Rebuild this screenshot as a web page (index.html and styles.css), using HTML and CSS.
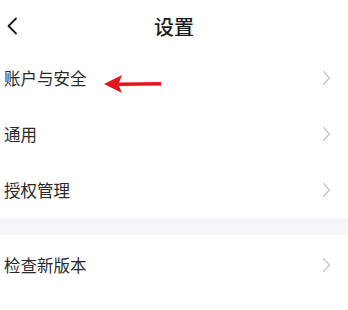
FILE: index.html
```html
<!DOCTYPE html>
<html lang="zh">
<head>
<meta charset="utf-8">
<link rel="stylesheet" href="styles.css">
</head>
<body>
<div class="page">
  <header class="nav">
    <svg class="back" width="12" height="18" viewBox="0 0 12 18"><path d="M10 1.5 L2.5 9 L10 16.5" fill="none" stroke="#1a1a1a" stroke-width="1.8" stroke-linecap="round" stroke-linejoin="round"/></svg>
    <div class="title">设置</div>
  </header>
  <div class="group">
    <div class="row"><span class="label">账户与安全</span><svg class="chev" width="9" height="16" viewBox="0 0 9 16"><path d="M1.5 1.5 L7.5 8 L1.5 14.5" fill="none" stroke="#c7c7c9" stroke-width="1.3" stroke-linecap="round" stroke-linejoin="round"/></svg></div>
    <div class="row"><span class="label">通用</span><svg class="chev" width="9" height="16" viewBox="0 0 9 16"><path d="M1.5 1.5 L7.5 8 L1.5 14.5" fill="none" stroke="#c7c7c9" stroke-width="1.3" stroke-linecap="round" stroke-linejoin="round"/></svg></div>
    <div class="row"><span class="label">授权管理</span><svg class="chev" width="9" height="16" viewBox="0 0 9 16"><path d="M1.5 1.5 L7.5 8 L1.5 14.5" fill="none" stroke="#c7c7c9" stroke-width="1.3" stroke-linecap="round" stroke-linejoin="round"/></svg></div>
  </div>
  <div class="sep"></div>
  <div class="group">
    <div class="row tall"><span class="label">检查新版本</span><svg class="chev" width="9" height="16" viewBox="0 0 9 16"><path d="M1.5 1.5 L7.5 8 L1.5 14.5" fill="none" stroke="#c7c7c9" stroke-width="1.3" stroke-linecap="round" stroke-linejoin="round"/></svg></div>
  </div>
  <svg class="arrow" width="60" height="22" viewBox="0 0 60 22"><path d="M0 9 L18 0 L15 7.5 L57 7 L57 10.5 L15 11 L18 18 Z" fill="#e3161d"/></svg>
</div>
</body>
</html>
```

FILE: styles.css
```css
html, body {
  margin: 0;
  padding: 0;
  background: #ffffff;
}
.page {
  position: relative;
  width: 348px;
  height: 310px;
  overflow: hidden;
  font-family: "Noto Sans CJK SC", "Noto Sans", sans-serif;
  color: #222222;
}
.nav {
  position: relative;
  height: 50px;
  display: flex;
  align-items: center;
  justify-content: center;
}
.back {
  position: absolute;
  left: 6px;
  top: 17px;
}
.title {
  font-size: 20px;
  font-weight: 500;
  color: #1a1a1a;
  line-height: 1;
  margin-top: 4px;
}
.row {
  height: 56px;
  display: flex;
  align-items: center;
  justify-content: space-between;
  padding: 0 17px 0 4px;
}
.row.tall {
  height: 60px;
}
.label {
  font-size: 16.5px;
  line-height: 1;
  color: #2a2a2a;
}
.chev {
  display: block;
}
.sep {
  height: 17px;
  background: #f6f6f8;
}
.arrow {
  position: absolute;
  left: 104px;
  top: 75px;
}
```
